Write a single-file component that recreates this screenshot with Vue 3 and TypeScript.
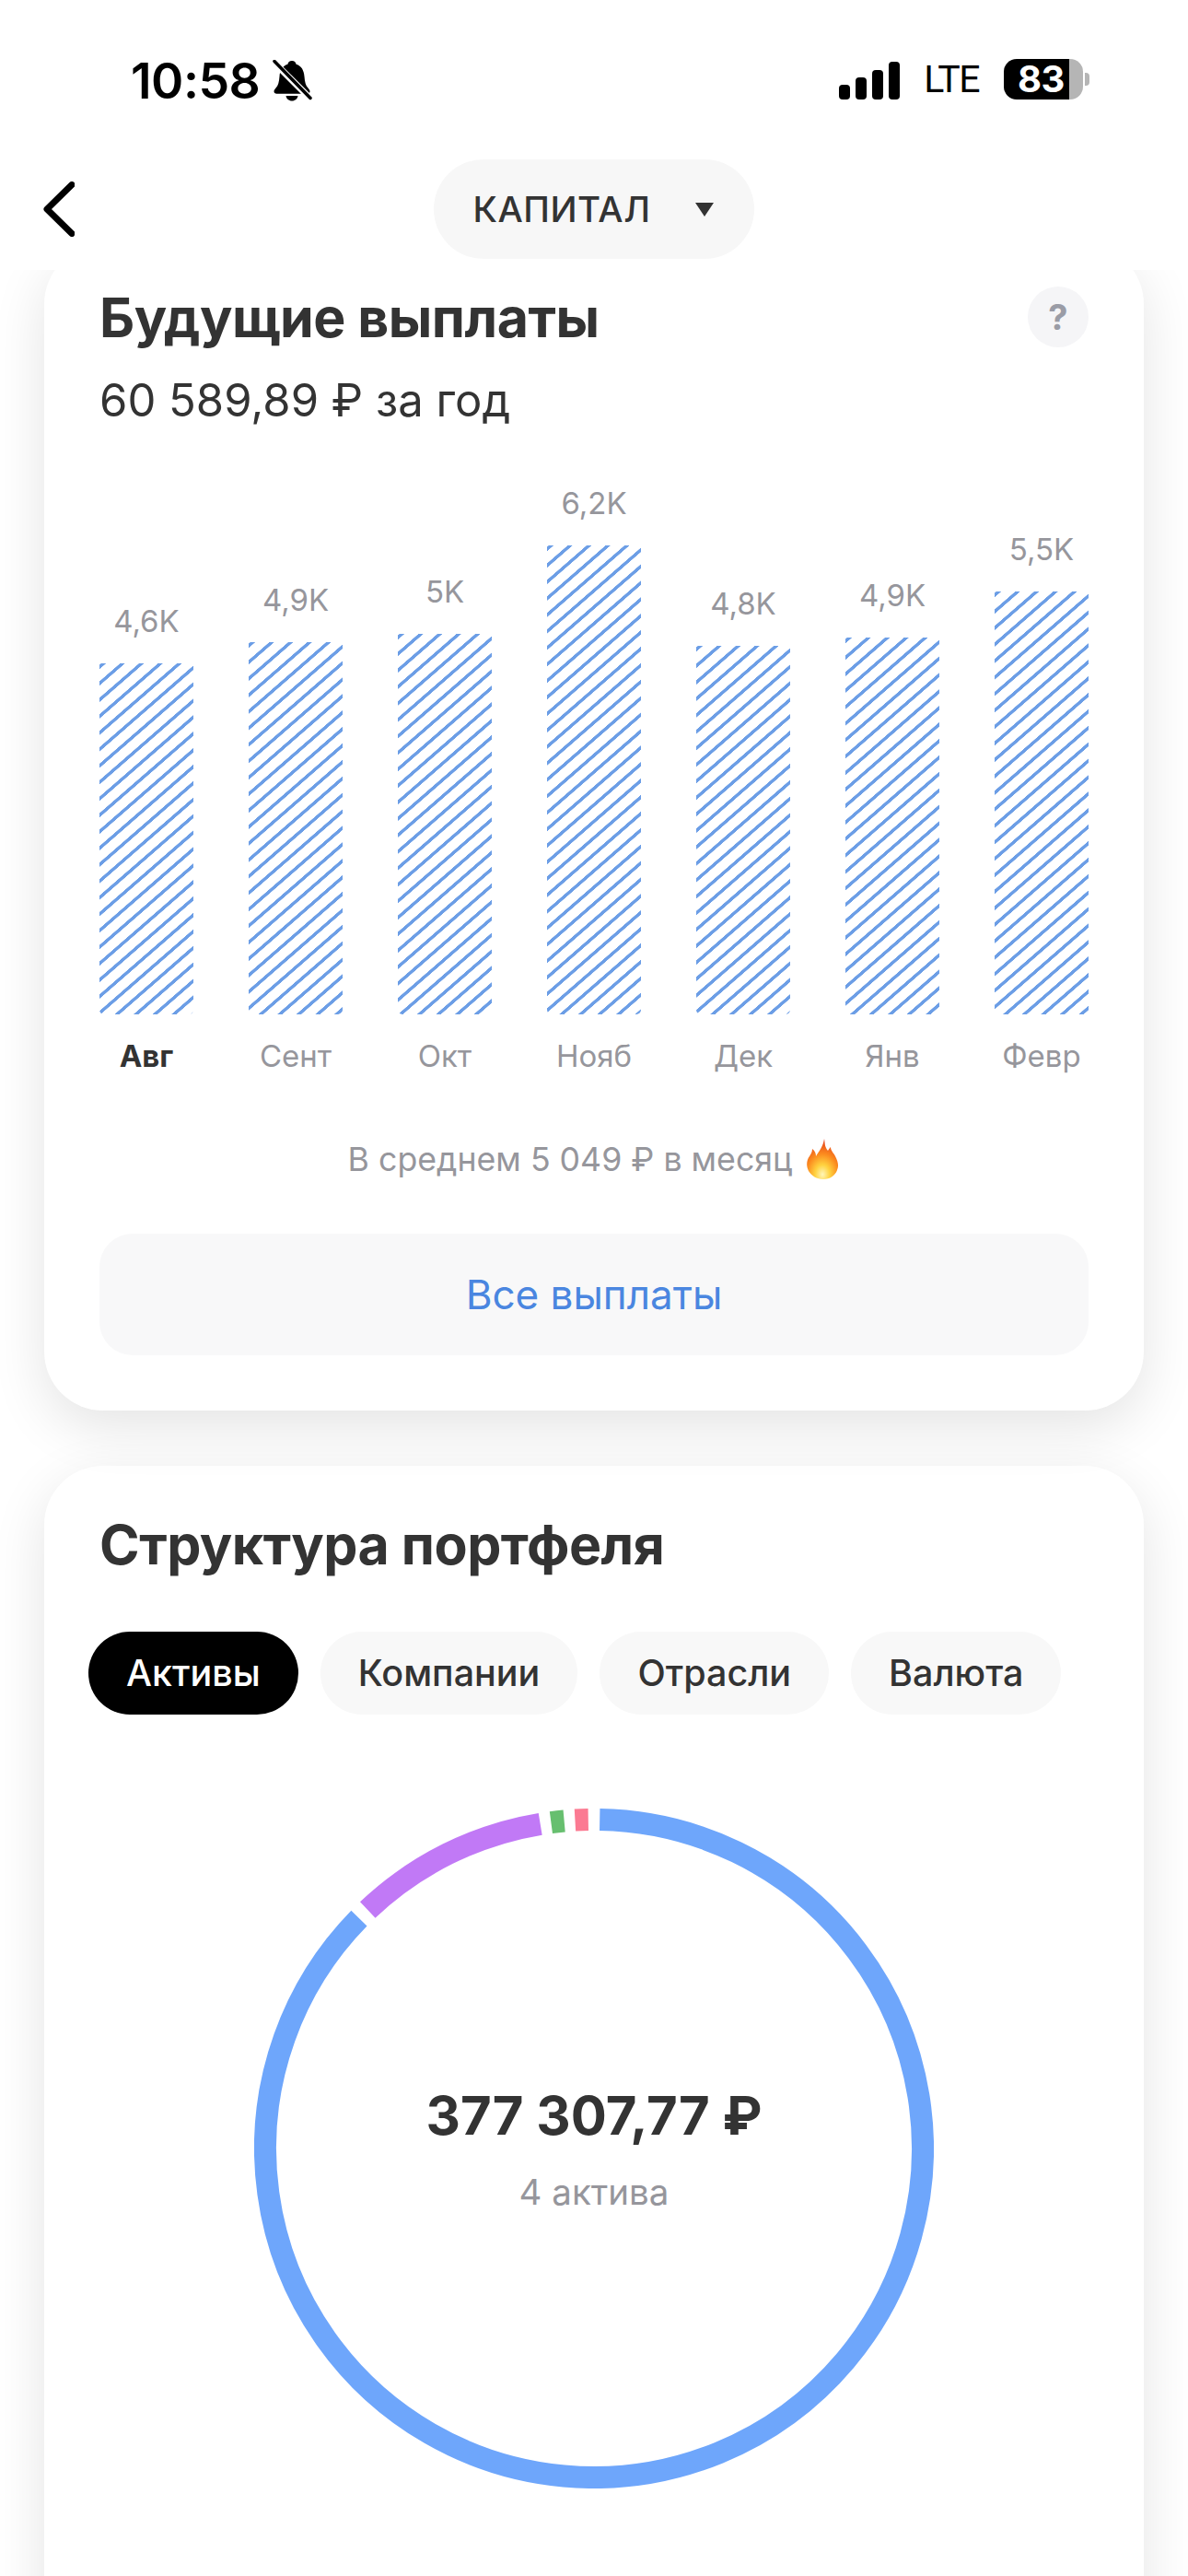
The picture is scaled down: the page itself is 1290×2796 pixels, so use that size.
<template>
  <div class="screen">
    <header class="top">
      <div class="status">
        <div class="status-left">
          <span class="time">10:58</span>
          <svg class="bell" viewBox="0 0 44 46" width="44" height="46">
            <path d="M22 1c-2.600 0-4.200 1.700-4.600 3.800C11.500 6.600 9 11.500 8.500 18c-.4 5.800-1.500 9.800-3.800 12.300C3.200 32 2.500 33 2.500 34.300c0 1.500 1.100 2.400 3 2.400h33c1.900 0 3-.9 3-2.400 0-1.300-.7-2.300-2.200-4-2.300-2.500-3.400-6.500-3.800-12.300-.5-6.500-3-11.400-8.900-13.200C26.200 2.700 24.600 1 22 1z" />
            <path d="M15.500 39c.5 3.200 3.100 5.500 6.500 5.500s6-2.300 6.500-5.500z" />
            <path class="bell-gap" d="M1 1l42 42" />
            <path class="bell-slash" d="M3 1.500l39 40" />
          </svg>
        </div>
        <div class="status-right">
          <div class="signal">
            <i v-for="h in signalBars" :key="h" :style="{ height: h + 'px' }"></i>
          </div>
          <span class="lte">LTE</span>
          <div class="battery">
            <div class="battery-body"><span>83</span></div>
            <div class="battery-nub"></div>
          </div>
        </div>
      </div>
      <div class="nav">
        <svg class="back" viewBox="0 0 34 60" width="34" height="60">
          <path d="M31 3.500L4 30l27 26.500" />
        </svg>
        <div class="picker">
          <span>КАПИТАЛ</span>
          <svg viewBox="0 0 22 16" width="22" height="16"><path d="M1 1h20L11 16z" /></svg>
        </div>
      </div>
    </header>

    <main class="content">
      <section class="card card-payouts">
        <div class="card-head">
          <h2>Будущие выплаты</h2>
          <div class="help">?</div>
        </div>
        <p class="total">60 589,89 ₽ за год</p>

        <div class="chart">
          <div v-for="m in months" :key="m.name" class="chart-col">
            <span class="chart-value">{{ m.value }}</span>
            <div class="bar" :style="{ height: m.height + 'px' }"></div>
          </div>
        </div>
        <div class="chart-months">
          <span v-for="(m, i) in months" :key="m.name" :class="{ active: i === 0 }">{{ m.name }}</span>
        </div>

        <div class="average">
          <span>В среднем 5 049 ₽ в месяц</span>
          <svg viewBox="0 0 38 46" width="38" height="46">
            <defs>
              <radialGradient id="flame" cx="50%" cy="88%" r="85%">
                <stop offset="0" stop-color="#fff6b8" />
                <stop offset="0.28" stop-color="#ffd23f" />
                <stop offset="0.6" stop-color="#fb8a1e" />
                <stop offset="1" stop-color="#e5401c" />
              </radialGradient>
            </defs>
            <path fill="url(#flame)" d="M21 1c1 5 0 8 4 13 1-2 2-3 3-4 0 4 3 6 5 10 3 6 4 10 2 15-2 6-8 10-15 10S7 41 4 36C1 30 2 24 5 20c1-2 3-4 3-8 3 2 4 5 4 8 3-5 8-11 9-19z" />
          </svg>
        </div>

        <button type="button" class="all-btn">Все выплаты</button>
      </section>

      <section class="card card-structure">
        <h2>Структура портфеля</h2>
        <div class="tabs">
          <span v-for="(t, i) in tabs" :key="t" class="tab" :class="{ active: i === 0 }">{{ t }}</span>
        </div>
        <div class="donut">
          <svg viewBox="0 0 738 738" width="738" height="738">
            <path v-for="s in arcs" :key="s.color" :d="s.d" :stroke="s.color" />
          </svg>
          <div class="donut-center">
            <strong>377 307,77 ₽</strong>
            <span>4 актива</span>
          </div>
        </div>
      </section>
    </main>
  </div>
</template>

<script setup lang="ts">
import { computed } from "vue";

const signalBars = [16, 24, 32, 41];

const months = [
  { name: "Авг", value: "4,6K", height: 381 },
  { name: "Сент", value: "4,9K", height: 404 },
  { name: "Окт", value: "5K", height: 413 },
  { name: "Нояб", value: "6,2K", height: 509 },
  { name: "Дек", value: "4,8K", height: 400 },
  { name: "Янв", value: "4,9K", height: 409 },
  { name: "Февр", value: "5,5K", height: 459 },
];

const tabs = ["Активы", "Компании", "Отрасли", "Валюта"];

const segments = [
  { from: 1, to: 314.4, color: "#6ea6fb" },
  { from: 316.5, to: 350.6, color: "#c179f6" },
  { from: 352.5, to: 354.8, color: "#67bf6f" },
  { from: 356.7, to: 359, color: "#fb7a92" },
];

const point = (deg: number) => {
  const rad = (deg * Math.PI) / 180;
  return `${(369 + 357 * Math.sin(rad)).toFixed(2)} ${(369 - 357 * Math.cos(rad)).toFixed(2)}`;
};

const arcs = computed(() =>
  segments.map((s) => ({
    color: s.color,
    d: `M${point(s.from)} A357 357 0 ${s.to - s.from > 180 ? 1 : 0} 1 ${point(s.to)}`,
  })),
);
</script>

<style>
html,
body {
  margin: 0;
  background: #fff;
}
</style>

<style scoped>
.screen {
  width: 1290px;
  height: 2796px;
  overflow: hidden;
  background: #fff;
  font-family: Inter, "Noto Sans", sans-serif;
  color: #333;
  display: flex;
  flex-direction: column;
}

.top {
  height: 293px;
  flex: none;
  background: #fff;
  position: relative;
  z-index: 2;
}

.status {
  height: 173px;
  display: flex;
  justify-content: space-between;
  align-items: flex-start;
  padding: 65px 107px 0 142px;
  box-sizing: border-box;
}

.status-left {
  display: flex;
  align-items: center;
  gap: 13px;
}

.time {
  font-size: 53.500px;
  line-height: 46px;
  font-weight: 600;
  color: #000;
  letter-spacing: -0.5px;
}

.bell {
  fill: #000;
}

.bell-gap {
  stroke: #fff;
  stroke-width: 7;
}

.bell-slash {
  stroke: #000;
  stroke-width: 3.500;
  stroke-linecap: round;
}

.status-right {
  display: flex;
  align-items: center;
  height: 44px;
  margin-top: -1px;
}

.signal {
  display: flex;
  align-items: flex-end;
  gap: 6px;
  height: 41px;
  margin-top: 3px;
}

.signal i {
  display: block;
  width: 12px;
  background: #000;
  border-radius: 4px;
}

.lte {
  margin-left: 26px;
  font-family: Roboto, sans-serif;
  font-size: 41px;
  font-weight: 400;
  color: #000;
  letter-spacing: -1.500px;
  line-height: 44px;
}

.battery {
  display: flex;
  align-items: center;
  margin-left: 27px;
}

.battery-body {
  width: 86px;
  height: 44px;
  border-radius: 14px;
  background: linear-gradient(90deg, #000 71px, #b5b5b5 71px);
  display: flex;
  align-items: center;
  padding-left: 15px;
  box-sizing: border-box;
}

.battery-body span {
  color: #fff;
  font-size: 40px;
  font-weight: 700;
  line-height: 44px;
  letter-spacing: -0.5px;
}

.battery-nub {
  width: 5px;
  height: 14px;
  margin-left: 2px;
  background: #b5b5b5;
  border-radius: 0 4px 4px 0;
}

.nav {
  height: 108px;
  position: relative;
  display: flex;
  justify-content: center;
}

.back {
  position: absolute;
  left: 47px;
  top: 24px;
  fill: none;
  stroke: #000;
  stroke-width: 7;
  stroke-linecap: round;
  stroke-linejoin: round;
}

.picker {
  width: 348px;
  height: 108px;
  border-radius: 54px;
  background: #f7f7f7;
  display: flex;
  align-items: center;
  justify-content: center;
  gap: 48px;
  font-size: 38.500px;
  font-weight: 500;
  letter-spacing: 0.5px;
}

.picker svg {
  fill: #333;
}

.content {
  flex: 1;
  min-height: 0;
  overflow: hidden;
  padding: 0 48px;
  box-sizing: border-box;
}

.card {
  background: #fff;
  border-radius: 64px;
  box-shadow: 0 18px 60px rgba(0, 0, 0, 0.11);
}

h2 {
  margin: 0;
  font-size: 59px;
  line-height: 68px;
  font-weight: 700;
  letter-spacing: -0.5px;
  color: #333;
}

.card-payouts {
  position: relative;
  z-index: 1;
  margin-top: -27px;
  padding: 45px 60px 60px;
}

.card-head {
  display: flex;
  justify-content: space-between;
  align-items: flex-start;
}

.help {
  width: 66px;
  height: 66px;
  border-radius: 50%;
  background: #f5f5f7;
  color: #9a9ca6;
  font-size: 38px;
  font-weight: 700;
  line-height: 66px;
  text-align: center;
}

.total {
  margin: 28px 0 0;
  font-size: 49px;
  line-height: 56px;
  font-weight: 400;
}

.chart {
  margin-top: 62px;
  height: 576px;
  display: grid;
  grid-template-columns: repeat(7, 102px);
  justify-content: space-between;
  align-items: end;
}

.chart-col {
  display: flex;
  flex-direction: column;
  align-items: center;
  gap: 26px;
}

.chart-value {
  font-size: 33px;
  line-height: 40px;
  color: #96969c;
}

.bar {
  width: 102px;
  border-radius: 0 0 5px 5px;
  background: repeating-linear-gradient(
    139deg,
    #fff 0,
    #fff 1px,
    #6c9ee6 1.500px,
    #6c9ee6 4.500px,
    #fff 5px,
    #fff 13.500px
  );
}

.chart-months {
  margin-top: 25px;
  display: grid;
  grid-template-columns: repeat(7, 102px);
  justify-content: space-between;
  font-size: 33px;
  line-height: 40px;
  color: #96969c;
  text-align: center;
}

.chart-months span {
  white-space: nowrap;
  justify-self: center;
}

.chart-months .active {
  color: #333;
  font-weight: 700;
}

.average {
  margin-top: 70px;
  height: 44px;
  display: flex;
  align-items: center;
  justify-content: center;
  gap: 14px;
  font-size: 35.700px;
  line-height: 44px;
  color: #96969c;
}

.all-btn {
  display: block;
  width: 100%;
  height: 132px;
  margin-top: 59px;
  border: 0;
  border-radius: 36px;
  background: #f8f8f9;
  color: #4a86e0;
  font-family: inherit;
  font-size: 44px;
  padding: 0;
}

.card-structure {
  margin-top: 60px;
  padding: 52px 60px 200px;
}

.tabs {
  margin: 60px 0 0 -12px;
  display: flex;
  gap: 24px;
}

.tab {
  height: 90px;
  line-height: 90px;
  padding: 0 41px;
  border-radius: 45px;
  background: #f8f8f8;
  font-size: 39.500px;
  font-weight: 500;
  white-space: nowrap;
}

.tab.active {
  background: #000;
  color: #fff;
}

.donut {
  position: relative;
  width: 738px;
  height: 738px;
  margin: 102px auto 0;
}

.donut svg {
  display: block;
  fill: none;
  stroke-width: 24;
}

.donut-center {
  position: absolute;
  left: 0;
  right: 0;
  top: 297px;
  display: flex;
  flex-direction: column;
  align-items: center;
}

.donut-center strong {
  font-size: 58px;
  line-height: 72px;
  font-weight: 700;
}

.donut-center span {
  margin-top: 25px;
  font-size: 38.500px;
  line-height: 44px;
  color: #96969c;
}
</style>
